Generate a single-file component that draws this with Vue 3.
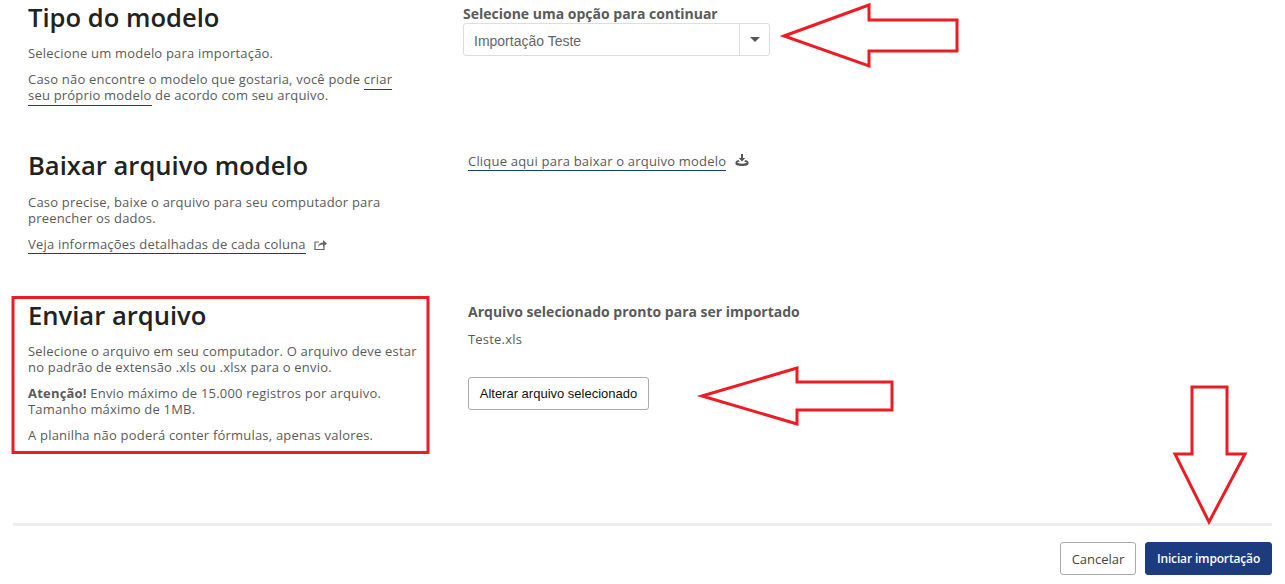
<script setup>
const arrows = [
  '784,36 869,5 869,20 957,20 957,51 869,51 869,66',
  '702,396 797,368 797,382 892,382 892,410 797,410 797,424',
  '1192,387 1227,387 1227,454 1245,454 1209,522 1175,454 1192,454'
]
</script>

<template>
  <div class="page">
    <section class="row row-one">
      <div class="info">
        <h2>Tipo do modelo</h2>
        <p>Selecione um modelo para importação.</p>
        <p>Caso não encontre o modelo que gostaria, você pode <a>criar seu próprio modelo</a> de acordo com seu arquivo.</p>
      </div>
      <div class="side side-select">
        <label>Selecione uma opção para continuar</label>
        <div class="select">
          <span class="select-value">Importação Teste</span>
          <span class="select-caret"><i></i></span>
        </div>
      </div>
    </section>

    <section class="row row-two">
      <div class="info">
        <h2>Baixar arquivo modelo</h2>
        <p>Caso precise, baixe o arquivo para seu computador para preencher os dados.</p>
        <p class="with-icon">
          <a>Veja informações detalhadas de cada coluna</a>
          <svg class="icon icon-share" width="13" height="12" viewBox="0 0 13 12" aria-hidden="true">
            <path d="M1 3h4M1 2.500v8h9V7" fill="none" stroke="#666" stroke-width="1.200" />
            <path d="M4 8c.3-3 2.500-4.500 5-4.500V1l4 3.600-4 3.400V5.600C7 5.600 5.300 6.300 4 8z" fill="#666" />
          </svg>
        </p>
      </div>
      <div class="side side-download">
        <p class="with-icon">
          <a>Clique aqui para baixar o arquivo modelo</a>
          <svg class="icon icon-down" width="14" height="13" viewBox="0 0 14 13" aria-hidden="true">
            <path d="M6 0h2v4h2.300L7 7.500 3.700 4H6z" fill="#555" />
            <path d="M3.500 6C1.500 6.500.5 7.300.5 8.500v1.200C.5 11 3 12 7 12s6.500-1 6.500-2.300V8.500C13.500 7.300 12.500 6.500 10.500 6L9 7.500c1.500.2 2.500.6 2.500 1.100 0 .6-2 1.100-4.500 1.100s-4.500-.5-4.500-1.100c0-.5 1-.9 2.500-1.100z" fill="#555" />
          </svg>
        </p>
      </div>
    </section>

    <section class="row row-three">
      <div class="info">
        <h2>Enviar arquivo</h2>
        <p>Selecione o arquivo em seu computador. O arquivo deve estar no padrão de extensão .xls ou .xlsx para o envio.</p>
        <p><b>Atenção!</b> Envio máximo de 15.000 registros por arquivo. Tamanho máximo de 1MB.</p>
        <p>A planilha não poderá conter fórmulas, apenas valores.</p>
      </div>
      <div class="side side-file">
        <h3>Arquivo selecionado pronto para ser importado</h3>
        <p>Teste.xls</p>
        <button class="change" type="button">Alterar arquivo selecionado</button>
      </div>
    </section>

    <footer class="footer">
      <button class="cancel" type="button">Cancelar</button>
      <button class="start" type="button">Iniciar importação</button>
    </footer>

    <svg class="marks" width="1285" height="584" viewBox="0 0 1285 584" aria-hidden="true">
      <polygon v-for="a in arrows" :key="a" :points="a" fill="none" stroke="#ed1c24" stroke-width="3" />
      <rect x="13" y="297.500" width="415" height="155" fill="none" stroke="#ed1c24" stroke-width="3" />
    </svg>
  </div>
</template>

<style>
html, body { margin: 0; background: #fff; }
</style>

<style scoped>
.page {
  position: relative;
  width: 1285px;
  height: 584px;
  overflow: hidden;
  font-family: "Open Sans", sans-serif;
  font-size: 13px;
  letter-spacing: .2px;
  line-height: 16px;
  color: #5a5a5a;
  background: #fff;
}
.row {
  display: grid;
  grid-template-columns: 440px 1fr;
  padding-left: 28px;
  box-sizing: border-box;
}
.row-one { height: 148px; }
.row-two { height: 150px; }
.row-three { height: 225px; }
.info { width: 396px; }
h2 {
  margin: 0 0 9px;
  font-size: 25.6px;
  letter-spacing: 0;
  line-height: 36px;
  font-weight: 600;
  color: #222;
}
.row-two h2 { margin-bottom: 10px; }
p { margin: 0 0 10px; }
a {
  color: #5a5a5a;
  border-bottom: 1px solid #1d3c7f;
  padding-bottom: 1px;
}
b { font-weight: 700; }
.with-icon { display: flex; align-items: center; gap: 9px; }
.icon-share { margin-left: -1px; }
.icon-down { margin-top: -3px; }
.row-one .info p:last-child { width: 370px; }
.row-two .info p:first-of-type { width: 370px; }
.side-select { margin-left: -5px; padding-top: 6px; }
.side-select label { display: block; font-size: 14px; letter-spacing: 0; font-weight: 700; height: 17px; }
.select {
  width: 307px;
  height: 33px;
  box-sizing: border-box;
  display: flex;
  align-items: stretch;
  border: 1px solid #ddd;
  border-radius: 3px;
}
.select-value {
  flex: 1;
  padding-left: 10px;
  font-family: "Liberation Sans", sans-serif;
  font-size: 14px;
  letter-spacing: 0;
  line-height: 34px;
  color: #666;
}
.select-caret {
  width: 29px;
  border-left: 1px solid #ddd;
  display: flex;
  align-items: center;
  justify-content: center;
}
.select-caret i {
  width: 0;
  height: 0;
  border-left: 5px solid transparent;
  border-right: 5px solid transparent;
  border-top: 5px solid #555;
}
.side-download { padding-top: 5px; }
.side-file { padding-top: 6px; }
h3 { margin: 0 0 11px; font-size: 14px; letter-spacing: 0; line-height: 16px; font-weight: 700; color: #5a5a5a; }
.side-file p { margin: 0 0 30px; }
button {
  box-sizing: border-box;
  border-radius: 3px;
  cursor: pointer;
  letter-spacing: 0;
}
.change {
  display: block;
  width: 181px;
  height: 33px;
  padding: 0;
  background: #fff;
  border: 1px solid #aaa;
  font-family: "Liberation Sans", sans-serif;
  font-size: 13px;
  color: #111;
}
.footer {
  margin-left: 13px;
  width: 1259px;
  box-sizing: border-box;
  border-top: 3px solid #eee;
  padding-top: 16px;
  display: flex;
  justify-content: flex-end;
  gap: 9px;
}
.cancel, .start { height: 33px; padding: 0; font-family: "Open Sans", sans-serif; font-size: 13px; }
.cancel { width: 76px; background: #fff; border: 1px solid #aaa; color: #444; }
.start { width: 127px; background: #1d3c7f; border: 1px solid #1d3c7f; color: #fff; font-size: 12px; letter-spacing: -.15px; font-weight: 600; }
.marks { position: absolute; left: 0; top: 0; pointer-events: none; }
</style>
